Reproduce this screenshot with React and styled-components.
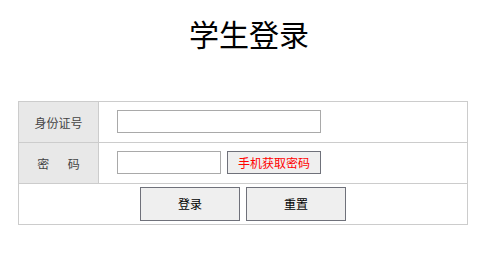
import React from "react";
import styled, { createGlobalStyle } from "styled-components";

const GlobalStyle = createGlobalStyle`
  html, body {
    margin: 0;
    padding: 0;
    background: #ffffff;
  }
  body {
    font-family: "Noto Sans CJK SC", "Liberation Sans", sans-serif;
    font-size: 12px;
    color: #333;
  }
`;

const Page = styled.div`
  width: 498px;
  padding-top: 18px;
`;

const Title = styled.h1`
  margin: 0 0 53px;
  font-family: "Noto Sans CJK SC", serif;
  font-weight: normal;
  font-size: 30px;
  line-height: 30px;
  text-align: center;
  color: #000;
`;

const Form = styled.form`
  margin: 0 0 0 18px;
  width: 450px;
  box-sizing: border-box;
  border: 1px solid #cccccc;
  border-bottom: none;
`;

const Row = styled.div`
  display: grid;
  grid-template-columns: ${(p) => (p.$full ? "1fr" : "80px 1fr")};
  height: 41px;
  box-sizing: border-box;
  border-bottom: 1px solid #cccccc;
`;

const Label = styled.div`
  display: flex;
  align-items: center;
  justify-content: center;
  background: #e8e8e8;
  border-right: 1px solid #cccccc;
  color: #444;
  font-size: 12px;
  word-spacing: ${(p) => (p.$spaced ? "16px" : "0")};
`;

const Field = styled.div`
  display: flex;
  align-items: flex-start;
  padding: 8px 0 0 18px;
  gap: 6px;
`;

const Actions = styled.div`
  display: flex;
  align-items: center;
  justify-content: center;
  gap: 6px;
`;

const Input = styled.input`
  width: ${(p) => p.$w}px;
  height: 23px;
  box-sizing: border-box;
  margin: 0;
  padding: 1px 3px;
  border: 1px solid #a9a9a9;
  background: #fff;
  font-size: 12px;
  outline: none;
`;

const Button = styled.button`
  width: ${(p) => p.$w}px;
  height: ${(p) => p.$h}px;
  box-sizing: border-box;
  margin: 0;
  padding: 0;
  border: 1px solid #6f717a;
  border-radius: 0;
  background: #efefef;
  color: ${(p) => p.$color || "#000"};
  font-family: "Noto Sans CJK SC", sans-serif;
  font-size: 12px;
  line-height: 1;
  cursor: pointer;
`;

export default function App() {
  return (
    <>
      <GlobalStyle />
      <Page>
        <Title>学生登录</Title>
        <Form onSubmit={(e) => e.preventDefault()}>
          <Row>
            <Label>身份证号</Label>
            <Field>
              <Input type="text" $w={204} />
            </Field>
          </Row>
          <Row>
            <Label $spaced>密 码</Label>
            <Field>
              <Input type="password" $w={104} />
              <Button type="button" $w={94} $h={23} $color="#ff0000">
                手机获取密码
              </Button>
            </Field>
          </Row>
          <Row $full>
            <Actions>
              <Button type="submit" $w={100} $h={34}>
                登录
              </Button>
              <Button type="reset" $w={100} $h={34}>
                重置
              </Button>
            </Actions>
          </Row>
        </Form>
      </Page>
    </>
  );
}
